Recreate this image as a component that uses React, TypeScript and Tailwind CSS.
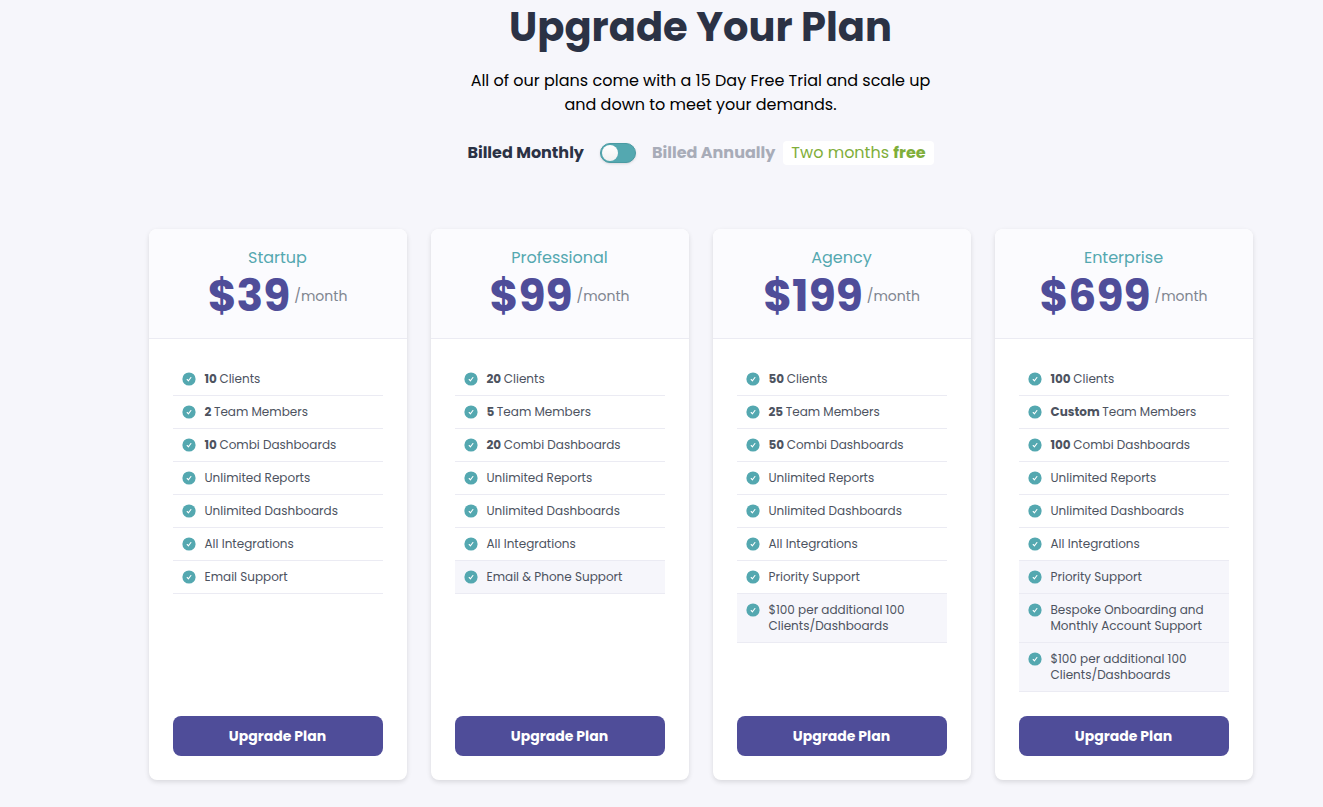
import React, { useState } from 'react';

interface Feature {
  amount?: string;
  label: string;
  highlighted?: boolean;
}

interface Plan {
  name: string;
  price: number;
  features: Feature[];
}

const plans: Plan[] = [
  {
    name: 'Startup',
    price: 39,
    features: [
      { amount: '10', label: 'Clients' },
      { amount: '2', label: 'Team Members' },
      { amount: '10', label: 'Combi Dashboards' },
      { label: 'Unlimited Reports' },
      { label: 'Unlimited Dashboards' },
      { label: 'All Integrations' },
      { label: 'Email Support' },
    ],
  },
  {
    name: 'Professional',
    price: 99,
    features: [
      { amount: '20', label: 'Clients' },
      { amount: '5', label: 'Team Members' },
      { amount: '20', label: 'Combi Dashboards' },
      { label: 'Unlimited Reports' },
      { label: 'Unlimited Dashboards' },
      { label: 'All Integrations' },
      { label: 'Email & Phone Support', highlighted: true },
    ],
  },
  {
    name: 'Agency',
    price: 199,
    features: [
      { amount: '50', label: 'Clients' },
      { amount: '25', label: 'Team Members' },
      { amount: '50', label: 'Combi Dashboards' },
      { label: 'Unlimited Reports' },
      { label: 'Unlimited Dashboards' },
      { label: 'All Integrations' },
      { label: 'Priority Support' },
      { label: '$100 per additional 100 Clients/Dashboards', highlighted: true },
    ],
  },
  {
    name: 'Enterprise',
    price: 699,
    features: [
      { amount: '100', label: 'Clients' },
      { amount: 'Custom', label: 'Team Members' },
      { amount: '100', label: 'Combi Dashboards' },
      { label: 'Unlimited Reports' },
      { label: 'Unlimited Dashboards' },
      { label: 'All Integrations' },
      { label: 'Priority Support', highlighted: true },
      { label: 'Bespoke Onboarding and Monthly Account Support', highlighted: true },
      { label: '$100 per additional 100 Clients/Dashboards', highlighted: true },
    ],
  },
];

const CheckBadge: React.FC = () => (
  <svg className="mt-px h-3.5 w-3.5 shrink-0" viewBox="0 0 14 14" fill="none" aria-hidden="true">
    <circle cx="7" cy="7" r="6.6" fill="#54a8b0" />
    <path d="M5.2 7.5 6.5 8.8 8.9 5.5" stroke="#fff" strokeWidth="1.1" strokeLinecap="round" strokeLinejoin="round" />
  </svg>
);

const PlanCard: React.FC<{ plan: Plan }> = ({ plan }) => (
  <section className="flex flex-col overflow-hidden rounded-lg bg-white shadow-[0_2px_5px_rgba(0,0,0,0.12)]">
    <div className="border-b border-[#ebebf3] bg-[#fbfbfe] pt-[17px] pb-4 text-center">
      <h2 className="text-base text-[#54a8b0]">{plan.name}</h2>
      <p className="flex items-center justify-center gap-1">
        <span className="text-[44px] leading-13 font-bold text-[#4f4d99]">${plan.price}</span>
        <span className="text-sm text-[#7f8590]">/month</span>
      </p>
    </div>
    <div className="flex flex-1 flex-col p-6">
      <ul className="mb-6 flex-1 text-xs text-[#4d535f]">
        {plan.features.map((feature) => (
          <li
            key={`${feature.amount ?? ''}${feature.label}`}
            className={`flex gap-[9px] border-b border-[#ebebf3] py-2 pr-4 pl-[9px] ${
              feature.highlighted ? 'bg-[#f6f6fb]' : ''
            }`}
          >
            <CheckBadge />
            <span>
              {feature.amount && <strong className="font-bold">{feature.amount} </strong>}
              {feature.label}
            </span>
          </li>
        ))}
      </ul>
      <button type="button" className="h-10 rounded-lg bg-[#4f4d99] text-sm font-bold text-white hover:bg-[#434187]">
        Upgrade Plan
      </button>
    </div>
  </section>
);

export default function App() {
  const [annual, setAnnual] = useState(false);

  return (
    <main className="min-h-screen bg-[#f6f6fb] pl-[78px] font-['Poppins','Inter',sans-serif]">
      <div className="mx-auto max-w-6xl px-6 pb-[27px]">
        <header className="flex flex-col items-center text-center">
          <h1 className="pt-[3px] text-[40px] leading-12 font-bold text-[#2b3245]">Upgrade Your Plan</h1>
          <p className="mt-[18px] max-w-[480px] text-base text-black">
            All of our plans come with a 15 Day Free Trial and scale up and down to meet your demands.
          </p>
          <div className="mt-6 mb-16 flex h-6 items-center text-base">
            <span className={annual ? 'font-bold text-[#a8acb8]' : 'font-bold text-[#2b3245]'}>Billed Monthly</span>
            <label className="mx-4 flex cursor-pointer">
              <input
                type="checkbox"
                role="switch"
                aria-label="Bill annually"
                checked={annual}
                onChange={(e) => setAnnual(e.target.checked)}
                className="peer sr-only"
              />
              <span className="flex h-5 w-9 items-center rounded-full border border-[#4a9ba3] bg-[#54a8b0] px-px shadow-sm peer-checked:justify-end">
                <span className="h-4 w-4 rounded-full bg-linear-to-b from-white to-[#f1f1f1]" />
              </span>
            </label>
            <span className={annual ? 'font-bold text-[#2b3245]' : 'font-bold text-[#a8acb8]'}>Billed Annually</span>
            <span className="ml-2 rounded bg-white px-2 text-[#7fae3a]">
              Two months <strong className="font-bold">free</strong>
            </span>
          </div>
        </header>

        <div className="grid grid-cols-4 gap-6">
          {plans.map((plan) => (
            <PlanCard key={plan.name} plan={plan} />
          ))}
        </div>
      </div>
    </main>
  );
}
